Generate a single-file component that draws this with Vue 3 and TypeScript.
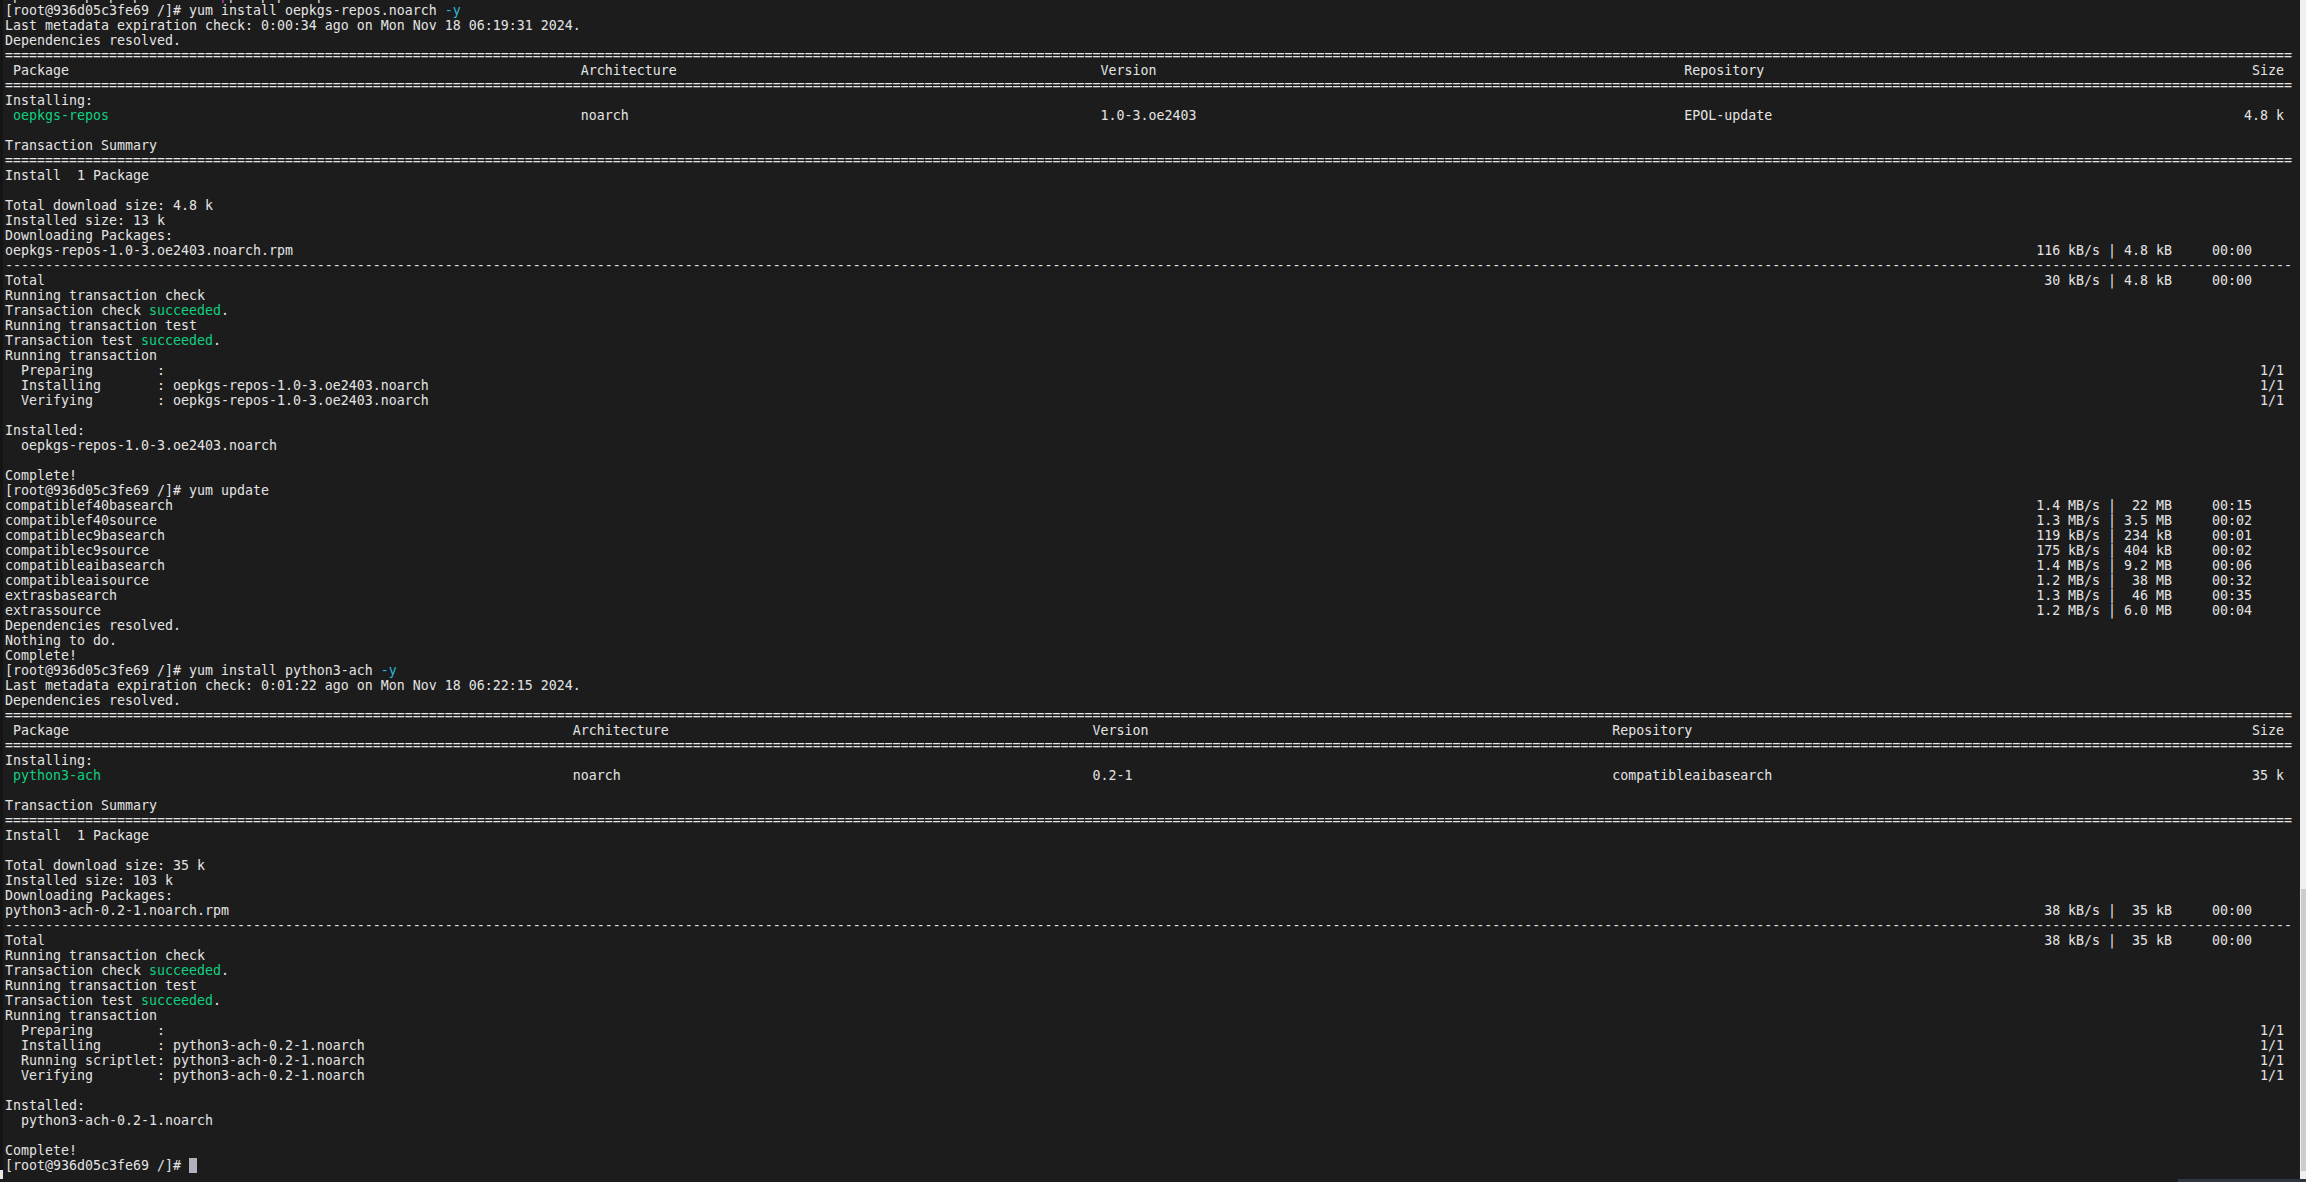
<script setup lang="ts">
type Kind = 'plain' | 'ok' | 'flag' | 'pink'
interface Seg { text: string; kind: Kind }
interface Row { id: number; segs: Seg[]; cursor: boolean }

const WIDTH = 286
const PROMPT = '[root@936d05c3fe69 /]# '

const s = (text: string, kind: Kind = 'plain'): Seg => ({ text, kind })
const rule = (c: string) => [s(c.repeat(WIDTH))]
const right = (left: string, tail: string, end: number) => left.padEnd(end - tail.length) + tail

function tableRow(cols: number[], a: string, b: string, c: string, d: string, size: string): string {
  const head = ' ' + a
  return right(head.padEnd(cols[0]) + b.padEnd(cols[1] - cols[0]) + c.padEnd(cols[2] - cols[1]) + d, size, 285)
}

function install(
  cmd: string,
  check: string,
  cols: number[],
  pkg: string,
  ver: string,
  repo: string,
  size: string,
  sizeShort: string,
  instSize: string,
  rpm: string,
  rate: string,
  rateTotal: string,
  downloaded: string,
  nvr: string,
  steps: string[],
): Seg[][] {
  const rows: Seg[][] = [
    [s(PROMPT + 'yum install ' + cmd + ' '), s('-y', 'flag')],
    [s('Last metadata expiration check: ' + check)],
    [s('Dependencies resolved.')],
    rule('='),
    [s(tableRow(cols, 'Package', 'Architecture', 'Version', 'Repository', 'Size'))],
    rule('='),
    [s('Installing:')],
    [
      s(' '),
      s(pkg, 'ok'),
      s(tableRow(cols, pkg, 'noarch', ver, repo, size).slice(pkg.length + 1)),
    ],
    [s('')],
    [s('Transaction Summary')],
    rule('='),
    [s('Install  1 Package')],
    [s('')],
    [s('Total download size: ' + sizeShort)],
    [s('Installed size: ' + instSize)],
    [s('Downloading Packages:')],
    [s(right(rpm, rate + ' | ' + downloaded + '     00:00', 281))],
    rule('-'),
    [s(right('Total', rateTotal + ' | ' + downloaded + '     00:00', 281))],
    [s('Running transaction check')],
    [s('Transaction check '), s('succeeded', 'ok'), s('.')],
    [s('Running transaction test')],
    [s('Transaction test '), s('succeeded', 'ok'), s('.')],
    [s('Running transaction')],
  ]
  steps.forEach((step, i) => {
    const label = '  ' + step.padEnd(17) + ': ' + (i === 0 ? '' : nvr)
    rows.push([s(right(label, '1/1', 285))])
  })
  rows.push([s('')], [s('Installed:')], [s('  ' + nvr)], [s('')], [s('Complete!')])
  return rows
}

const repos: [string, string, string, string][] = [
  ['compatiblef40basearch', '1.4 MB/s', ' 22 MB', '00:15'],
  ['compatiblef40source', '1.3 MB/s', '3.5 MB', '00:02'],
  ['compatiblec9basearch', '119 kB/s', '234 kB', '00:01'],
  ['compatiblec9source', '175 kB/s', '404 kB', '00:02'],
  ['compatibleaibasearch', '1.4 MB/s', '9.2 MB', '00:06'],
  ['compatibleaisource', '1.2 MB/s', ' 38 MB', '00:32'],
  ['extrasbasearch', '1.3 MB/s', ' 46 MB', '00:35'],
  ['extrassource', '1.2 MB/s', '6.0 MB', '00:04'],
]

const all: Seg[][] = [
  [
    s(' p        p  p  p          '),
    s('p', 'pink'),
    s('p   p p    p'),
  ],
  ...install(
    'oepkgs-repos.noarch',
    '0:00:34 ago on Mon Nov 18 06:19:31 2024.',
    [72, 137, 210],
    'oepkgs-repos',
    '1.0-3.oe2403',
    'EPOL-update',
    '4.8 k',
    '4.8 k',
    '13 k',
    'oepkgs-repos-1.0-3.oe2403.noarch.rpm',
    '116 kB/s',
    ' 30 kB/s',
    '4.8 kB',
    'oepkgs-repos-1.0-3.oe2403.noarch',
    ['Preparing', 'Installing', 'Verifying'],
  ),
  [s(PROMPT + 'yum update')],
  ...repos.map(([name, rate, size, time]) => [s(right(name, `${rate} | ${size}     ${time}`, 281))]),
  [s('Dependencies resolved.')],
  [s('Nothing to do.')],
  [s('Complete!')],
  ...install(
    'python3-ach',
    '0:01:22 ago on Mon Nov 18 06:22:15 2024.',
    [71, 136, 201],
    'python3-ach',
    '0.2-1',
    'compatibleaibasearch',
    '35 k',
    '35 k',
    '103 k',
    'python3-ach-0.2-1.noarch.rpm',
    ' 38 kB/s',
    ' 38 kB/s',
    ' 35 kB',
    'python3-ach-0.2-1.noarch',
    ['Preparing', 'Installing', 'Running scriptlet', 'Verifying'],
  ),
  [s(PROMPT)],
]

const rows: Row[] = all.map((segs, id) => ({ id, segs, cursor: id === all.length - 1 }))
</script>

<template>
  <div class="window">
    <div class="edge">
      <div class="edge-dark"></div>
      <div class="edge-light"></div>
      <div class="edge-foot"></div>
    </div>
    <main class="terminal">
      <div v-for="row in rows" :key="row.id" class="line">
        <span v-for="(seg, i) in row.segs" :key="i" :class="seg.kind">{{ seg.text }}</span>
        <span v-if="row.cursor" class="cursor"></span>
      </div>
    </main>
    <aside class="scrollbar">
      <div class="thumb"></div>
    </aside>
    <div class="taskbar"></div>
  </div>
</template>

<style scoped>
.window {
  position: relative;
  display: flex;
  width: 2306px;
  height: 1182px;
  overflow: hidden;
  background: #1c1c1c;
}
.edge {
  display: flex;
  flex-direction: column;
  flex: 0 0 3px;
}
.edge-dark {
  flex: 1;
  background: #141414;
}
.edge-light {
  height: 9px;
  background: #e8e8e8;
}
.edge-foot {
  height: 3px;
  background: #1c1c1c;
}
.terminal {
  flex: 1;
  min-width: 0;
  padding: 3px 0 0 2px;
  overflow: hidden;
  font-family: "DejaVu Sans Mono", "Liberation Mono", monospace;
  font-size: 13.288px;
  letter-spacing: 0.01px;
  line-height: 15px;
  color: #e4e4e4;
  background: #1c1c1c;
}
.line {
  height: 15px;
  white-space: pre;
}
.line:first-child {
  margin-top: -15px;
}
.ok {
  color: #10d080;
}
.flag {
  color: #2fb5d8;
}
.pink {
  color: #d040c8;
}
.cursor {
  display: inline-block;
  width: 8px;
  height: 15px;
  vertical-align: top;
  background: #b2b2bf;
}
.scrollbar {
  display: flex;
  flex-direction: column;
  justify-content: flex-end;
  flex: 0 0 6px;
  padding-bottom: 11px;
  background: #f0f0f0;
}
.thumb {
  height: 282px;
  margin-left: 1px;
  background: #cdcdcd;
}
.taskbar {
  position: absolute;
  right: 0;
  bottom: 0;
  width: 128px;
  height: 3px;
  background: #2d3540;
}
</style>

<style>
html,
body {
  margin: 0;
  background: #1c1c1c;
}
</style>
